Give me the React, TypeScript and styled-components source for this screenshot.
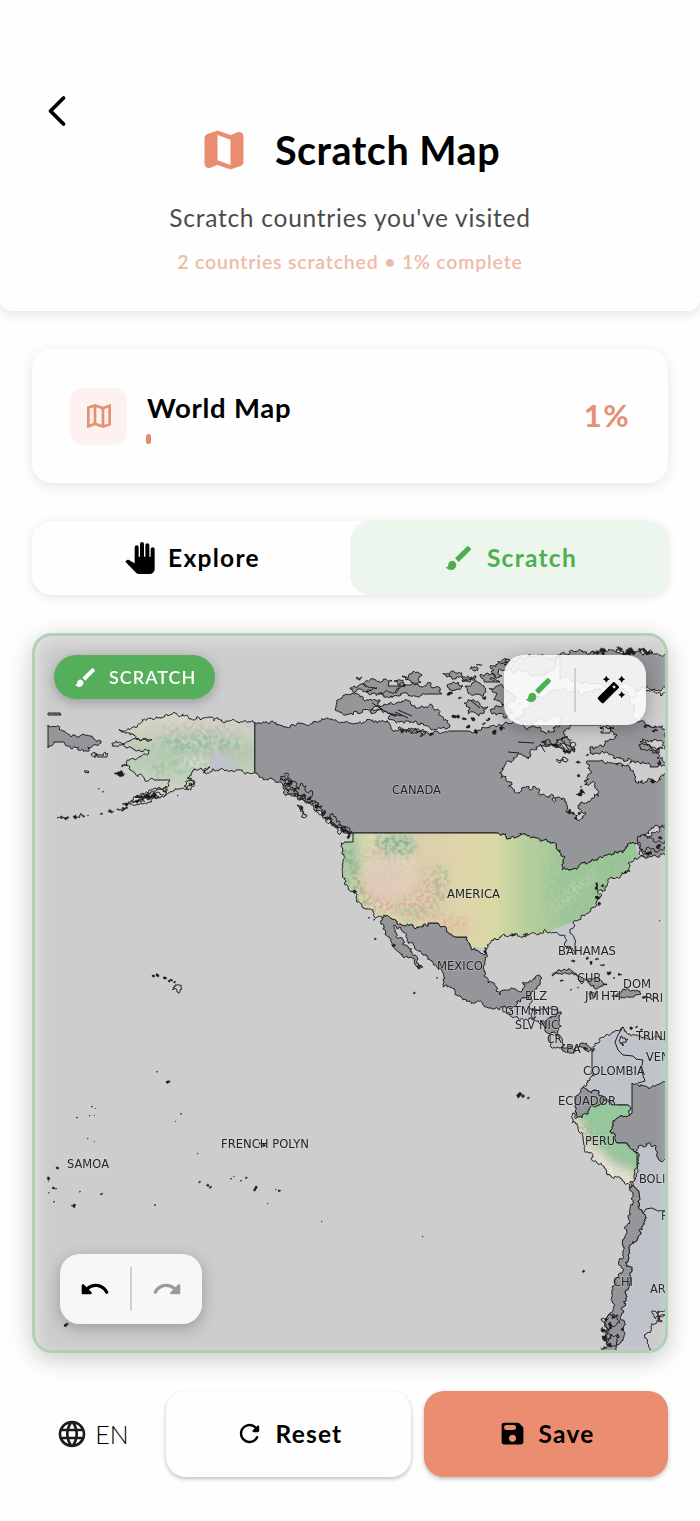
import React, { useState } from "react";
import styled, { createGlobalStyle } from "styled-components";
import { MdBrush, MdLanguage, MdOutlineMap, MdPanTool } from "react-icons/md";

const GlobalStyle = createGlobalStyle`
  * {
    box-sizing: border-box;
  }
  body {
    margin: 0;
    background: #fefefe;
    font-family: Lato, "Open Sans", sans-serif;
    color: #000;
  }
  button {
    font-family: inherit;
    color: inherit;
    border: none;
    background: none;
    padding: 0;
  }
`;

const Page = styled.div`
  width: 700px;
  height: 1521px;
  overflow: hidden;
`;
const Header = styled.header`
  position: relative;
  display: flex;
  flex-direction: column;
  align-items: center;
  height: 311px;
  padding-top: 124px;
  background: #fefefe;
  border-radius: 0 0 12px 12px;
  box-shadow: 0 4px 12px rgba(0, 0, 0, 0.1);
`;
const BackButton = styled.button`
  position: absolute;
  left: 41px;
  top: 95px;
  width: 32px;
  height: 32px;
`;
const TitleRow = styled.div`
  display: flex;
  align-items: center;
  gap: 25px;
  height: 52px;
  margin-right: 2px;
  svg {
    color: #ea8c6f;
  }
`;
const Title = styled.h1`
  margin: 0;
  font-size: 39.5px;
  font-weight: 700;
  line-height: 52px;
  letter-spacing: 0.5px;
`;
const Subtitle = styled.p`
  margin: 26px 0 0;
  font-size: 24.5px;
  line-height: 32px;
  letter-spacing: 0.75px;
  color: #4b4b4b;
`;
const Stats = styled.p`
  margin: 16px 0 0;
  font-size: 19.5px;
  font-weight: 600;
  line-height: 24px;
  letter-spacing: 0.8px;
  color: #efbaa8;
`;
const Content = styled.main`
  display: flex;
  flex-direction: column;
  gap: 38px;
  padding: 38px 32px 0;
`;
const ProgressCard = styled.section`
  display: flex;
  align-items: center;
  gap: 20px;
  height: 134px;
  padding: 0 38px;
  background: #fefefe;
  border-radius: 20px;
  box-shadow: 0 3px 14px rgba(0, 0, 0, 0.1);
`;
const IconTile = styled.div`
  display: flex;
  align-items: center;
  justify-content: center;
  width: 57px;
  height: 57px;
  border-radius: 13px;
  background: #fdf2ef;
  color: #e68f74;
`;
const ProgressInfo = styled.div`
  flex: 1;
  height: 57px;
`;
const ProgressTitle = styled.div`
  font-size: 27.5px;
  font-weight: 700;
  line-height: 40px;
  letter-spacing: 0.75px;
`;
const Bar = styled.div`
  width: 5px;
  height: 10px;
  margin: 6px 0 0 -1px;
  border-radius: 3px;
  background: #e68a6e;
`;
const Percent = styled.div`
  margin-top: -3px;
  font-size: 31px;
  font-weight: 700;
  letter-spacing: 1.4px;
  color: #e39076;
`;
const Segments = styled.div`
  display: flex;
  height: 74px;
  border-radius: 20px;
  background: #fefefe;
  box-shadow: 0 2px 10px rgba(0, 0, 0, 0.11);
`;
const Segment = styled.button<{ $active?: boolean }>`
  display: flex;
  flex: 1;
  align-items: center;
  justify-content: center;
  gap: 12px;
  padding: 0 0 1px 2px;
  border-radius: 20px;
  font-size: 24.5px;
  font-weight: 700;
  letter-spacing: 1.3px;
  background: ${(p) => (p.$active ? "#ecf6ed" : "transparent")};
  color: ${(p) => (p.$active ? "#4caf50" : "#000")};
`;
const MapFrame = styled.section`
  position: relative;
  height: 720px;
  border: 3px solid #b0d2b4;
  border-radius: 20px;
  box-shadow: 0 6px 24px rgba(0, 0, 0, 0.22);
  background: #cdcdcd;
  overflow: hidden;
  > svg {
    display: block;
  }
`;
const Vignette = styled.div`
  position: absolute;
  inset: 0;
  border-radius: 17px;
  box-shadow: inset 4px 5px 14px rgba(255, 255, 255, 0.38);
  pointer-events: none;
`;
const Badge = styled.div`
  position: absolute;
  left: 19px;
  top: 19px;
  display: flex;
  align-items: center;
  gap: 11px;
  width: 161px;
  height: 44px;
  padding-left: 19px;
  border-radius: 22px;
  background: #55ae59;
  box-shadow: 0 3px 12px rgba(0, 0, 0, 0.25);
  color: #fff;
  font-size: 18px;
  font-weight: 600;
  letter-spacing: 1px;
`;
const ToolPanel = styled.div<{ $left: number; $top: number }>`
  position: absolute;
  left: ${(p) => p.$left}px;
  top: ${(p) => p.$top}px;
  display: flex;
  align-items: center;
  width: 142px;
  height: 70px;
  border-radius: 20px;
  background: rgba(253, 253, 253, 0.88);
  box-shadow: 0 4px 16px rgba(0, 0, 0, 0.25);
`;
const ToolButton = styled.button<{ $color?: string }>`
  display: flex;
  flex: 1;
  justify-content: center;
  color: ${(p) => p.$color || "#000"};
`;
const Divider = styled.div`
  width: 2px;
  height: 44px;
  background: #cfcfcf;
`;
const Actions = styled.footer`
  display: grid;
  grid-template-columns: 121px 245px 244px;
  gap: 13px;
  height: 86px;
`;
const Language = styled.button`
  display: flex;
  align-items: center;
  justify-content: center;
  gap: 7px;
  padding-bottom: 1px;
  font-size: 25px;
  font-weight: 300;
`;
const ActionButton = styled.button<{ $primary?: boolean }>`
  display: flex;
  align-items: center;
  justify-content: center;
  gap: 12px;
  padding-bottom: 1px;
  border-radius: 20px;
  background: ${(p) => (p.$primary ? "#eb8d70" : "#fefefe")};
  box-shadow: 0 2px 4px rgba(0, 0, 0, 0.25);
  font-size: 24.5px;
  font-weight: 700;
  letter-spacing: 1.2px;
`;

const icons = {
  map: "M14.65 4.98l-5-1.75c-.42-.15-.88-.15-1.3-.01L4.36 4.56C3.55 4.84 3 5.6 3 6.46v11.85c0 1.41 1.41 2.37 2.72 1.86l2.93-1.14c.22-.09.47-.09.69-.01l5 1.75c.42.15.88.15 1.3.01l3.99-1.34c.81-.27 1.36-1.04 1.36-1.9V5.69c0-1.41-1.41-2.37-2.72-1.86l-2.93 1.14c-.22.08-.46.09-.69.01zM15 18.89l-6-2.11V5.11l6 2.11v11.67z",
  undo: "M12.5 8c-2.65 0-5.05.99-6.9 2.6L3.71 8.71C3.08 8.08 2 8.52 2 9.41V15c0 .55.45 1 1 1h5.59c.89 0 1.34-1.08.71-1.71l-1.91-1.91c1.39-1.16 3.16-1.88 5.12-1.88 3.16 0 5.89 1.84 7.19 4.5.27.56.91.84 1.5.64.71-.23 1.07-1.04.75-1.72C20.23 10.42 16.65 8 12.5 8z",
  redo: "M11.5 8c2.65 0 5.05.99 6.9 2.6l1.89-1.89c.63-.63 1.71-.19 1.71.7V15c0 .55-.45 1-1 1h-5.59c-.89 0-1.34-1.08-.71-1.71l1.91-1.91c-1.39-1.16-3.16-1.88-5.12-1.88-3.16 0-5.89 1.84-7.19 4.5-.27.56-.91.84-1.5.64-.71-.23-1.07-1.04-.75-1.72C3.77 10.42 7.35 8 11.5 8z",
  refresh: "M17.65 6.35c-1.63-1.63-3.94-2.57-6.48-2.31-3.67.37-6.69 3.35-7.1 7.02C3.52 15.91 7.27 20 12 20c3.19 0 5.93-1.87 7.21-4.56.32-.67-.16-1.44-.9-1.44-.37 0-.72.2-.88.53-1.13 2.43-3.84 3.97-6.8 3.31-2.22-.49-4.01-2.3-4.48-4.52C5.31 9.44 8.26 6 12 6c1.66 0 3.14.69 4.22 1.78l-1.51 1.51c-.63.63-.19 1.71.7 1.71H19c.55 0 1-.45 1-1V6.41c0-.89-1.08-1.34-1.71-.71l-.64.65z",
  save: "M17.59 3.59c-.38-.38-.89-.59-1.42-.59H5c-1.11 0-2 .9-2 2v14c0 1.1.9 2 2 2h14c1.1 0 2-.9 2-2V7.83c0-.53-.21-1.04-.59-1.41l-2.82-2.83zM12 19c-1.66 0-3-1.34-3-3s1.34-3 3-3 3 1.34 3 3-1.34 3-3 3zm1-10H7c-1.1 0-2-.9-2-2s.9-2 2-2h6c1.1 0 2 .9 2 2s-.9 2-2 2z",
  wand: "M20 6.600l.94-1.660L22.600 4l-1.660-.94L20 1.400l-.94 1.660L17.400 4l1.660.94zM8.500 6.600l.94-1.660L11.100 4l-1.660-.94L8.500 1.400l-.94 1.660L5.900 4l1.660.94zM20 12.900l-.94 1.660-1.660.94 1.660.94.94 1.660.94-1.660 1.660-.94-1.660-.94zM17.710 9.120l-2.830-2.830c-.200-.190-.450-.290-.710-.290-.260 0-.510.100-.710.290L2.290 17.460a.996.996 0 0 0 0 1.410l2.830 2.830c.200.200.450.300.710.300s.510-.100.710-.290l11.170-11.170c.390-.390.390-1.030 0-1.420zm-3.540-.700l1.410 1.410L14.410 11 13 9.590l1.170-1.170z",
};

function Icon({ name, size }: { name: keyof typeof icons; size: number }) {
  return (
    <svg width={size} height={size} viewBox="0 0 24 24" fill="currentColor">
      <path d={icons[name]} />
    </svg>
  );
}

type Point = [number, number];

const parse = (s: string) => s.split(" ").map((p) => p.split(",").map(Number) as Point);

// Breaks a segment into a coast-like line. Both directions give the same shape,
// so neighbours share their border. Horizontal and vertical segments stay straight.
function coast(a: Point, b: Point, k: number): Point[] {
  const len = Math.hypot(b[0] - a[0], b[1] - a[1]);
  if (len < 2 || a[0] === b[0] || a[1] === b[1]) return [b];
  const s = Math.sin((a[0] + b[0]) * 12.9898 + (a[1] + b[1]) * 78.233) * 43758.5453;
  const amp = len > 11 ? k * 0.6 : k * 1.25;
  const off = (s - Math.floor(s) - 0.5) * amp * (a[0] < b[0] ? 1 : -1);
  const m: Point = [
    (a[0] + b[0]) / 2 - (b[1] - a[1]) * off + 0.001,
    (a[1] + b[1]) / 2 + (b[0] - a[0]) * off + 0.001,
  ];
  return [...coast(a, m, k), ...coast(m, b, k)];
}

function toPath(s: string, k = 0.6) {
  const pts = parse(s);
  const out: Point[] = [pts[0]];
  pts.forEach((p, i) => out.push(...coast(p, pts[(i + 1) % pts.length], k)));
  return "M" + out.map((p) => p[0].toFixed(1) + " " + p[1].toFixed(1)).join("L") + "Z";
}

const DARK = "#949699";
const LIGHT = "#c0c4ca";
const SEA = "#cdcdcd";

const alaska =
  "254.7,722.3 236.7,721.7 206.7,718 186.7,715 172.7,713.7 156.7,716.7 141.7,722.3 133,727 119.3,729.3 130,735 143,739 152,739.5 130,740.5 111.7,743.7 126.7,748.3 149,750 146.7,755 136.7,759 126.7,761.7 121.7,766.7 130,770 141.7,775 145,781 158,780 170,780 165,788 150,794 130,801.7 156.7,796 173.3,790.7 193.3,782 187,778 196.7,770 210,767 203,773 216.7,770 230,771 243,771.7 254.7,772.7";
const usa =
  "353,833 498,833 500,835 517,837.5 533,837 550,843 560,850 565,857 562,870 583,863 590,862 607,855 623,853 628,846 633,842 638,844 642,855 628,863 627,872 612,877 605,887 597,891 600,898 595,907 583,915 573,922 570,931 575,943 575,954 570,948 565,943 562,935 550,932 540,933 528,935 523,936 510,935 495,938 487,945 486,953 477,950 467,937 455,937 438,923 428,923 428,926 413,925 392,919 382,918 373,912 363,908 353,892 345,878 343,863 345,842 353,842";
const peru =
  "603,1102 612,1105 628,1105 630,1115 617,1118 610,1132 617,1143 627,1143 635,1152 637,1167 635,1180 630,1188 607,1175 597,1163 583,1137 572,1123 573,1113 582,1118";

const lands: [string, string][] = [
  // canada
  [DARK, "254.7,722.3 263,722 283,726.7 297,724 313,721.7 325,719 338,722 360,721.7 373,722 390,725 393,731 413,729 428,733 450,731 467,731 487,728 503,725 513,722 530,700 560,690 637,700 647,725 672,737 672,850 642,856 638,844 633,842 628,846 623,853 607,855 590,862 583,863 562,870 565,857 560,850 550,843 533,837 517,837.5 500,835 498,833 353,833 350,832 337,827 323,818 313,805 297,797 283,788 270,778 254.7,772.7"],
  // siberia
  [DARK, "48,725 65,732 80,736 93,738 101,741 96,745 88,747 89,751 76,747 64,742 54,742 50,746 48,748"],
  [DARK, "48,713 60,713 61,715 48,715"],
  // arctic islands
  [DARK, "335,710 342,698 360,697 380,700 371,710 353,715 341,712"],
  [DARK, "377,706 384,704 410,703 433,706 443,717 450,726 430,728 400,722 388,718 396,716 370,712 382,710"],
  [DARK, "350,688 363,684 375,686 366,692 357,690"],
  [DARK, "363,684 374,679 392,681 388,686 400,686 396,691 380,694 366,692 377,688"],
  [DARK, "398,690 410,685 422,687 427,684 440,688 442,694 428,694 418,697 407,693 400,696 378,694"],
  [DARK, "402,676 412,674 422,675 419,678 421,682 406,680"],
  [DARK, "394,681 400,680 404,683 398,685"],
  [DARK, "443,673 452,671 462,673 476,676 474,680 462,678 455,679"],
  [DARK, "447,685 458,682 463,686 456,690 449,688"],
  [DARK, "465,686 472,683 484,686 486,692 476,694 468,692"],
  [DARK, "462,680 472,678 470,682"],
  [DARK, "480,675 488,673 497,676 490,679 500,682 486,682"],
  [DARK, "490,666 498,661 506,659 504,665 510,668 498,672 502,676 492,674"],
  [DARK, "505,662 520,657 540,656 560,655 555,668 530,674 512,672"],
  [DARK, "560,655 575,652 590,654 605,651 620,653 640,652 655,654 672,652 672,688 640,690 600,684 560,680"],
  [DARK, "489,688 500,685 508,690 515,700 505,706 494,700 497,694"],
  [DARK, "491,709 503,705 514,712 506,718 496,715"],
  [DARK, "464,703 474,700 480,704 488,707 484,713 474,712 468,714 470,708"],
  [DARK, "470,669 474,667 478,668 475,671"],
  [DARK, "356,678 362,677 359,680"],
  // baja and mexico
  [DARK, "382,918 392,919 413,925 428,926 428,923 438,923 455,937 467,937 477,950 486,953 483,967 488,983 500,995 520,992 523,982 542,978 537,987 528,998 517,1002 510,1009 503,1007 490,1008 463,1000 443,987 445,978 437,967 423,955 408,943 400,927 394,925 403,940 412,953 422,968 417,967 408,958 400,953 392,945 390,938"],
  // central america
  [LIGHT, "503,1007 510,1009 517,1002 528,998 529,1007 540,1010 561,1012 548,1020 540,1024 528,1020 512,1017"],
  [DARK, "561,1012 559,1023 558,1036 550,1034 541,1022 548,1019"],
  [LIGHT, "550,1034 558,1036 565,1045 559,1048 550,1042"],
  [DARK, "562,1046 573,1049 583,1043 593,1050 588,1052 583,1047 574,1053 568,1052"],
  // caribbean
  [DARK, "552,976 560,970 575,973 587,978 607,984 600,987 590,985 588,980 570,974"],
  [DARK, "624,989 637,990 641,994 628,997 612,995 621,993"],
  [DARK, "589,994 596,996 590,997"],
  // south america
  [LIGHT, "592,1050 602,1037 613,1032 623,1027 624,1031 630,1034 645,1037 672,1042 672,1312 658,1311 660,1317 647,1333 652,1351 652,1356 610,1356 622,1310 625,1293 632,1270 628,1260 638,1237 643,1213 637,1190 633,1185 637,1167 635,1152 630,1115 628,1105 612,1105 602,1095 583,1087 592,1070"],
  [DARK, "632,1083 647,1087 672,1079 672,1159 657,1157 655,1145 635,1152 627,1143 617,1143 610,1132 617,1118 630,1115 632,1113"],
  [DARK, "583,1087 602,1095 603,1102 582,1118 577,1113 575,1100"],
  [DARK, "633,1185 637,1190 643,1213 638,1237 628,1260 632,1270 625,1293 622,1310 623,1330 618,1351 602,1351 607,1335 610,1313 612,1293 622,1273 623,1247 628,1217 630,1188"],
];

const waters = [
  "543,746 530,753 513,758 502,768 501,778 510,782 513,789 530,790 547,797 565,799 566,812 577,820 583,818 585,812 580,803 592,798 597,790 595,783 585,780 592,772 587,761 600,761 620,763 630,770 635,780 647,782 660,777 672,768 672,762 657,767 650,767 635,763 620,757 607,752 590,750 590,747 605,741 617,735 613,732 602,725 570,725 565,731 562,740 575,752 557,748",
  "640,742 653,741 672,750 672,765 657,758 660,752 650,746",
  "513,722 540,718 560,720 556,726 553,732 545,733 536,727 525,728",
  "640,690 672,689 672,737 647,725 637,722",
  "672,828 650,830 640,838 650,836",
];

const details = [
  "350,834 345,831 338,829 330,822 325,817 330,816 336,822 345,827 352,831",
  "281,776 290,779 296,786 305,790 312,796 309,804 300,799 294,791 286,786",
  "297,805 303,809 307,816 300,811",
  "184,786 190,781 195,783 188,790",
  "91,754 100,755 107,757 98,757",
  "84,771 88,771 86,773",
  "638,843 647,838 672,834 672,844 655,850 646,848",
  "175,985 180,985 182,989 177,992",
  "622,1036 625,1038 624,1045 620,1042",
  "600,727 608,729 614,728 610,733 601,733",
  "557,759 566,758 567,761 560,763",
  "284,780 292,784 298,792 306,797 300,800 292,794",
  "312,800 318,806 326,812 322,815 316,810",
  "326,820 334,823 342,828 350,829 348,832 338,828",
  "135,797 148,793 158,788 166,786 160,793 148,798",
  "545,742 556,740 566,745 575,749 570,753 558,747",
  "641,744 650,745 658,753 648,750",
  "398,728 410,732 425,734 415,730",
  "533,1008 537,1013 534,1020 531,1014",
  "608,1316 614,1314 618,1320 612,1326",
  "604,1330 612,1328 610,1338 603,1340",
  "611,1338 617,1334 616,1346 608,1346",
  "655,1311 665,1315 662,1322 658,1318",
];

// short dark strokes for islets: x, y, width, height
const islets = [
  [57, 817, 12, 2], [73, 815, 12, 2], [87, 815, 2, 1], [100, 813, 3, 1.5], [108, 810, 6, 2], [117, 807, 11, 2.5], [131, 800, 14, 3], [142, 797, 14, 3], [155, 797, 4, 2],
  [122, 803, 8, 2], [136, 799, 8, 2.5], [148, 796, 8, 2.5], [98, 788, 1.5, 1.5], [102, 791, 2, 1.5], [177, 795, 1.5, 1.2], [114, 772, 9, 2],
  [152, 975, 3, 2], [156, 974, 3, 2.5], [163, 977, 4, 2], [168, 979, 5, 3], [173, 981, 3, 2],
  [156, 1071, 2, 1.5], [166, 1081, 4, 2.5], [91, 1106, 2, 1.3], [76, 1117, 2, 1.3], [89, 1115, 1.4, 1.4], [94, 1115, 1, 1], [87, 1138, 1.4, 1.2], [95, 1108, 1, 1], [94, 1141, 1, 1], [180, 1113, 2, 1.5], [175, 1121, 1.3, 1], [197, 1153, 1.5, 1.2],
  [56, 1167, 3, 2], [48, 1177, 2, 5], [52, 1187, 3, 2], [55, 1188, 2, 1.6], [48, 1192, 1.5, 1.5], [53, 1201, 2, 1.5], [79, 1191, 1.8, 1.4], [71, 1204, 5, 2.5], [100, 1193, 3, 2], [154, 1204, 2, 2],
  [198, 1181, 3, 2], [206, 1184, 3, 2], [209, 1186, 3, 2.5], [230, 1178, 2, 1.5], [233, 1176, 1.5, 1], [240, 1180, 2, 1.5], [245, 1177, 2.5, 1.6], [254, 1186, 3, 5], [275, 1189, 1.6, 1.2], [278, 1190, 3, 2], [267, 1203, 1.3, 1],
  [259, 1142, 1.6, 3], [262, 1144, 4, 3], [321, 1221, 1.4, 1], [422, 1236, 1.5, 1.2], [582, 1270, 3, 2.5], [64, 1323, 5, 3.5],
  [413, 992, 2.5, 2], [374, 938, 2.4, 2], [368, 917, 2, 1.5], [373, 919, 2, 1.5], [436, 977, 2, 1.5], [659, 920, 1.3, 1.3],
  [516, 1093, 5, 5], [521, 1094, 4, 4], [527, 1097, 2.5, 2],
  [586, 957, 3, 3], [590, 961, 2, 4], [595, 958, 4, 2], [600, 964, 5, 2], [607, 972, 4, 3], [613, 977, 2, 2], [618, 974, 4, 1.5], [560, 980, 4, 1.5],
  [570, 989, 2, 1.5], [577, 987, 2, 1.3], [630, 1027, 3, 3], [635, 1026, 3, 2], [640, 1029, 3, 1.5], [642, 996, 6, 2], [650, 997, 8, 2],
  [576, 792, 9, 4], [580, 789, 3, 4], [567, 810, 7, 4], [577, 774, 3, 3], [580, 786, 2, 1.5], [576, 761, 5, 2.5], [586, 754, 3, 2], [578, 812, 3, 3], [574, 817, 3, 2],
  [605, 1318, 3, 4], [601, 1327, 3, 5], [609, 1322, 3, 6], [603, 1336, 4, 5], [608, 1343, 3, 4], [601, 1346, 6, 3], [612, 1314, 2, 5], [621, 1328, 3, 3],
  [466, 725, 4, 3], [474, 729, 3, 4], [429, 733, 5, 3], [492, 730, 4, 5], [482, 722, 4, 3], [500, 727, 5, 3], [447, 692, 6, 3], [399, 684, 7, 2], [650, 779, 5, 4], [640, 780, 3, 3], [657, 760, 4, 5],
  [452, 716, 8, 2], [462, 718, 5, 2], [472, 717, 3, 4], [486, 718, 4, 3], [458, 697, 4, 2], [482, 697, 4, 2], [476, 664, 6, 1], [592, 650.5, 14, 1.2], [616, 650.5, 18, 1.2], [640, 651, 12, 1.2],
  [541, 741, 6, 2], [552, 744, 6, 2], [563, 750, 8, 2], [644, 726, 6, 2], [652, 729, 6, 3], [657, 747, 6, 3],
  [286, 781, 7, 4], [294, 787, 6, 4], [301, 794, 5, 4], [307, 797, 4, 3], [315, 805, 4, 3], [321, 812, 4, 3], [340, 829, 6, 3], [347, 834, 3, 5], [299, 807, 4, 3],
  [596, 882, 2, 8], [601, 884, 3, 3], [595, 896, 5, 3], [598, 902, 3, 4], [624, 871, 6, 2], [644, 852, 8, 3], [656, 844, 5, 5], [658, 836, 4, 3], [523, 933, 5, 3], [353, 890, 4, 3],
  [392, 944, 4, 3], [417, 965, 3, 4], [484, 947, 2, 6], [511, 934, 5, 2], [566, 946, 3, 3], [571, 960, 4, 1.5], [583, 1047, 5, 3], [592, 1048, 3, 4],
];

// [text, x, baseline, width], no width where the edge cuts the label
const labels: [string, number, number, number?][] = [
  ["CANADA", 392, 794, 49], ["AMERICA", 447, 898, 53], ["BAHAMAS", 558, 955, 58], ["MEXICO", 437, 970, 46],
  ["CUB", 577, 982, 24], ["DOM", 623, 988, 28], ["JM", 585, 1000, 14], ["HTI", 601, 1000, 20], ["PRI", 645, 1002],
  ["BLZ", 525, 1000, 22], ["GTM", 505, 1015, 26], ["HND", 533, 1015, 26], ["SLV", 515, 1029, 20], ["NIC", 539, 1029, 20],
  ["CR", 547, 1043, 15], ["PA", 566, 1053, 15], ["TRINI", 636, 1040], ["VEN", 646, 1061], ["COLOMBIA", 583, 1075, 62],
  ["ECUADOR", 558, 1105, 58], ["PERU", 585, 1145, 30], ["BOLI", 639, 1183], ["F", 661, 1220], ["CHI", 613, 1286, 20],
  ["AR", 650, 1293], ["FRENCH POLYN", 221, 1148, 88], ["SAMOA", 67, 1168, 42],
];

function WorldMap() {
  const coastline = { stroke: "#1c1c1e", strokeWidth: 1, strokeLinejoin: "round" as const };
  return (
    <svg width="630" height="714" viewBox="35 636 630 714">
      <defs>
        <linearGradient id="plains" gradientUnits="userSpaceOnUse" x1="343" y1="0" x2="645" y2="0">
          <stop offset="0" stopColor="#b4cdaa" />
          <stop offset="0.09" stopColor="#dad8b2" />
          <stop offset="0.25" stopColor="#dccfae" />
          <stop offset="0.42" stopColor="#dfd5a9" />
          <stop offset="0.5" stopColor="#d8d9a4" />
          <stop offset="0.6" stopColor="#b8d09d" />
          <stop offset="0.72" stopColor="#a2c898" />
          <stop offset="1" stopColor="#9ac398" />
        </linearGradient>
        <linearGradient id="tundra" x1="0" y1="0" x2="0" y2="1">
          <stop offset="0" stopColor="#dad7ce" />
          <stop offset="0.25" stopColor="#ccd0bf" />
          <stop offset="0.45" stopColor="#b6cbb3" />
          <stop offset="1" stopColor="#d6d7ca" />
        </linearGradient>
        <filter id="soft" x="-50%" y="-50%" width="200%" height="200%">
          <feGaussianBlur stdDeviation="5" />
        </filter>
        <filter id="speckle" x="-20%" y="-20%" width="140%" height="140%">
          <feGaussianBlur in="SourceGraphic" stdDeviation="5" result="area" />
          <feTurbulence type="fractalNoise" baseFrequency="0.2" numOctaves="4" seed="4" />
          <feColorMatrix values="0 0 0 0 0  0 0 0 0 0  0 0 0 0 0  4 0 0 0 -1.6" result="mask" />
          <feComposite in="area" in2="mask" operator="in" />
        </filter>
        <filter id="grain" x="-20%" y="-20%" width="140%" height="140%">
          <feGaussianBlur in="SourceGraphic" stdDeviation="5" result="area" />
          <feTurbulence type="fractalNoise" baseFrequency="0.3" numOctaves="3" seed="11" />
          <feColorMatrix values="0 0 0 0 0  0 0 0 0 0  0 0 0 0 0  0 4.500 0 0 -1.9" result="mask" />
          <feComposite in="area" in2="mask" operator="in" />
        </filter>
        <clipPath id="usaClip"><path d={toPath(usa)} /></clipPath>
        <clipPath id="alaskaClip"><path d={toPath(alaska)} /></clipPath>
        <clipPath id="peruClip"><path d={toPath(peru)} /></clipPath>
      </defs>
      <rect x="35" y="636" width="630" height="714" fill={SEA} />
      {lands.map(([fill, pts], i) => (
        <path key={i} d={toPath(pts)} fill={fill} {...coastline} />
      ))}
      {waters.map((pts, i) => (
        <path key={i} d={toPath(pts, 0.75)} fill={SEA} {...coastline} />
      ))}

      <g clipPath="url(#usaClip)">
        <rect x="335" y="825" width="320" height="135" fill="url(#plains)" />
        <g filter="url(#soft)">
          <ellipse cx="351" cy="858" rx="5" ry="26" fill="#a6c6a2" />
          <ellipse cx="362" cy="891" rx="4" ry="16" fill="#e0dfa6" transform="rotate(-28 362 891)" />
          <ellipse cx="396" cy="845" rx="16" ry="9" fill="#b5cdab" />
          <ellipse cx="388" cy="884" rx="26" ry="20" fill="#dfcbb3" />
          <ellipse cx="455" cy="930" rx="20" ry="10" fill="#e0cda8" />
        </g>
        <g filter="url(#speckle)">
          <ellipse cx="395" cy="846" rx="20" ry="13" fill="#86b08d" />
          <ellipse cx="440" cy="884" rx="6" ry="20" fill="#86b28e" />
          <ellipse cx="354" cy="876" rx="6" ry="44" fill="#84b08a" transform="rotate(-18 354 876)" />
          <ellipse cx="415" cy="912" rx="24" ry="6" fill="#a3bf98" />
          <ellipse cx="590" cy="885" rx="45" ry="40" fill="#8fbf93" opacity="0.5" />
        </g>
        <g filter="url(#grain)">
          <ellipse cx="382" cy="880" rx="26" ry="34" fill="#d3ab98" />
          <ellipse cx="416" cy="893" rx="26" ry="26" fill="#d6b19b" />
          <ellipse cx="450" cy="924" rx="18" ry="9" fill="#dcb59c" />
          <ellipse cx="390" cy="875" rx="30" ry="24" fill="#e9e3da" opacity="0.6" />
          <ellipse cx="573" cy="892" rx="34" ry="4" fill="#c3d6bb" transform="rotate(-38 573 892)" />
        </g>
        <path d="M550 931L574 921L580 960L550 960Z" fill="#c5c9cf" />
        <path d="M474 946L490 950L488 956L474 956Z" fill="#c5c9cf" />
        <path d="M634 840L640 845L646 858L638 856Z" fill="#c5c9cf" />
      </g>
      <path d={toPath(usa)} fill="none" {...coastline} />

      <g clipPath="url(#alaskaClip)">
        <rect x="105" y="708" width="155" height="100" fill="url(#tundra)" />
        <g filter="url(#speckle)">
          <ellipse cx="200" cy="744" rx="46" ry="9" fill="#8fbc9b" />
          <ellipse cx="172" cy="768" rx="24" ry="9" fill="#9cc5a1" />
          <ellipse cx="150" cy="752" rx="20" ry="6" fill="#b3ccae" />
        </g>
        <g filter="url(#grain)">
          <ellipse cx="200" cy="730" rx="44" ry="4" fill="#aeb0aa" />
          <ellipse cx="225" cy="756" rx="30" ry="6" fill="#bcbab2" />
          <ellipse cx="196" cy="763" rx="14" ry="6" fill="#e4e2dc" />
        </g>
        <path d="M215 748L209 766L214 775L256 776L243 771Z" fill="#c0c4ca" />
        <path d="M236 720L256 734L256 720Z" fill="#c5c8cd" />
      </g>
      <path d={toPath(alaska)} fill="none" {...coastline} />

      <g clipPath="url(#peruClip)">
        <rect x="565" y="1095" width="80" height="100" fill="#97c89b" />
        <g filter="url(#soft)">
          <path d="M566 1108L576 1112L593 1140L612 1162L636 1172L640 1192L600 1180L563 1125Z" fill="#e0d9c8" />
        </g>
        <g filter="url(#grain)">
          <path d="M580 1116L600 1144L615 1160L636 1170L632 1188L604 1165L584 1130Z" fill="#87907f" />
          <path d="M590 1140L615 1165L634 1172L632 1188L604 1172Z" fill="#eeebe6" />
        </g>
      </g>
      <path d={toPath(peru)} fill="none" {...coastline} />

      <path d="M623 1027L618 1035L615 1042L618 1050L623 1055L633 1056L636 1059L643 1060L641 1070L645 1081L638 1083" fill="none" {...coastline} />
      <path d="M643 1213L646 1209L652 1208L658 1211L668 1210M637 1152L637 1166" fill="none" {...coastline} />
      <path d="M519 753L508 752M534 743L518 742M545 752L540 744M395 712L408 718M412 716L398 710M555 745L565 749L560 743M372 703L388 713L402 716M470 700L480 708M500 664L515 660" fill="none" {...coastline} />
      {details.map((pts, i) => (
        <path key={i} d={toPath(pts, 0.9)} fill={i === 6 ? DARK : "none"} {...coastline} />
      ))}
      {islets.map(([x, y, w, h], i) => (
        <path
          key={i}
          d={toPath(`${x},${y + h * 0.6} ${x + w * 0.55},${y} ${x + w},${y + h * 0.45} ${x + w * 0.4},${y + h}`, 0.9)}
          fill="#1a1a1c"
          stroke="#1a1a1c"
          strokeWidth={w > 2 ? 0.5 : 0.2}
        />
      ))}
      <g
        fontFamily="'DejaVu Sans', sans-serif"
        fontSize="11.4"
        fill="#222"
        stroke="rgba(230,230,230,0.35)"
        strokeWidth="1.4"
        paintOrder="stroke"
      >
        {labels.map(([text, x, y, width]) => (
          <text key={text} x={x} y={y} textLength={width} lengthAdjust="spacingAndGlyphs">
            {text}
          </text>
        ))}
      </g>
    </svg>
  );
}

function App() {
  const [mode, setMode] = useState<"explore" | "scratch">("scratch");
  return (
    <Page>
      <GlobalStyle />
      <Header>
        <BackButton aria-label="Back">
          <svg width="32" height="32" viewBox="0 0 32 32" fill="none" stroke="#000" strokeWidth="3.8" strokeLinecap="round" strokeLinejoin="round">
            <path d="M22.500 3L9.500 16L22.500 29" />
          </svg>
        </BackButton>
        <TitleRow>
          <Icon name="map" size={52} />
          <Title>Scratch Map</Title>
        </TitleRow>
        <Subtitle>Scratch countries you've visited</Subtitle>
        <Stats>2 countries scratched • 1% complete</Stats>
      </Header>
      <Content>
        <ProgressCard>
          <IconTile>
            <MdOutlineMap size={32} />
          </IconTile>
          <ProgressInfo>
            <ProgressTitle>World Map</ProgressTitle>
            <Bar />
          </ProgressInfo>
          <Percent>1%</Percent>
        </ProgressCard>
        <Segments>
          <Segment $active={mode === "explore"} onClick={() => setMode("explore")}>
            <MdPanTool size={32} />
            Explore
          </Segment>
          <Segment $active={mode === "scratch"} onClick={() => setMode("scratch")}>
            <MdBrush size={32} />
            Scratch
          </Segment>
        </Segments>
        <MapFrame>
          <WorldMap />
          <Vignette />
          <Badge>
            <MdBrush size={25} />
            SCRATCH
          </Badge>
          <ToolPanel $left={469} $top={19}>
            <ToolButton $color="#4caf50">
              <MdBrush size={32} />
            </ToolButton>
            <Divider />
            <ToolButton>
              <Icon name="wand" size={32} />
            </ToolButton>
          </ToolPanel>
          <ToolPanel $left={25} $top={618}>
            <ToolButton>
              <Icon name="undo" size={32} />
            </ToolButton>
            <Divider />
            <ToolButton $color="#9b9b9b">
              <Icon name="redo" size={32} />
            </ToolButton>
          </ToolPanel>
        </MapFrame>
        <Actions>
          <Language>
            <MdLanguage size={32} color="#1c1c1e" />
            EN
          </Language>
          <ActionButton>
            <Icon name="refresh" size={29} />
            Reset
          </ActionButton>
          <ActionButton $primary>
            <Icon name="save" size={29} />
            Save
          </ActionButton>
        </Actions>
      </Content>
    </Page>
  );
}

export default App;
